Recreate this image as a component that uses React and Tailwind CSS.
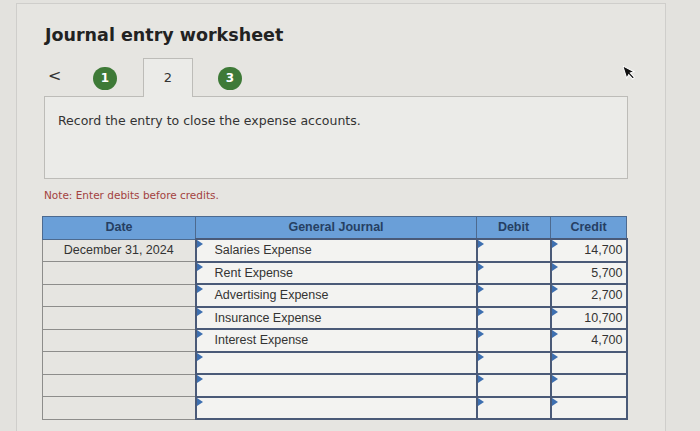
import React from "react";

const rows = [
  { date: "December 31, 2024", account: "Salaries Expense", credit: "14,700" },
  { date: "", account: "Rent Expense", credit: "5,700" },
  { date: "", account: "Advertising Expense", credit: "2,700" },
  { date: "", account: "Insurance Expense", credit: "10,700" },
  { date: "", account: "Interest Expense", credit: "4,700" },
  { date: "", account: "", credit: "" },
  { date: "", account: "", credit: "" },
  { date: "", account: "", credit: "" },
];

const Marker = () => (
  <span className="absolute left-0 top-0 w-0 h-0 border-t-[4px] border-b-[4px] border-l-[6px] border-t-transparent border-b-transparent border-l-[#3d6fb0]"></span>
);

const Step = ({ n }) => (
  <div className="w-[24px] h-[23px] rounded-full bg-[#3e7a37] text-white text-[12px] font-bold flex items-center justify-center font-['DejaVu_Sans',sans-serif]">
    {n}
  </div>
);

export default function App() {
  return (
    <div className="w-[700px] h-[431px] bg-[#e3e2de] overflow-hidden relative">
      <div className="ml-[16px] mt-[3px] w-[650px] h-[440px] border-l border-t border-r border-[#cfcecb] bg-[#e6e5e1] pl-[25px]">
        <h1 className="mt-[19px] ml-[3px] text-[17.5px] font-bold text-[#222] font-['DejaVu_Sans',sans-serif] leading-[24px]">
          Journal entry worksheet
        </h1>

        {/* tabs */}
        <div className="mt-[11px] ml-[1px] flex items-end h-[39px] relative z-10">
          <div className="w-[50px] h-[38px] flex items-center pl-[5px] pb-[4px] text-[16px] text-[#333] font-['DejaVu_Sans',sans-serif]">
            &lt;
          </div>
          <div className="w-[50px] h-[38px] flex items-center">
            <Step n="1" />
          </div>
          <div className="w-[50px] h-[39px] border border-b-0 border-[#bdbcb8] bg-[#ebebe8] flex items-center justify-center text-[13px] text-[#333] font-['DejaVu_Sans',sans-serif]">
            2
          </div>
          <div className="w-[62px] h-[38px] flex items-center pl-[25px]">
            <Step n="3" />
          </div>
        </div>

        <div className="-mt-[1px] ml-[2px] w-[584px] h-[83px] border border-[#bdbcb8] bg-[#ebebe8] pt-[15px] pl-[13px]">
          <p className="text-[12.5px] text-[#333] font-['DejaVu_Sans',sans-serif]">
            Record the entry to close the expense accounts.
          </p>
        </div>

        <p className="mt-[9px] ml-[2px] text-[10.5px] text-[#a3423f] font-['DejaVu_Sans',sans-serif]">
          Note: Enter debits before credits.
        </p>

        <table className="mt-[12px] border-collapse text-[12.5px] text-[#333] font-['Liberation_Sans',Arial,sans-serif]">
          <thead>
            <tr className="h-[23px] bg-[#6a9fd8] text-[#263f63] font-bold">
              <th className="w-[153px] border border-[#4d6a8f] font-bold">Date</th>
              <th className="w-[281px] border border-[#4d6a8f] font-bold">General Journal</th>
              <th className="w-[74px] border border-[#4d6a8f] font-bold">Debit</th>
              <th className="w-[76px] border border-[#4d6a8f] font-bold">Credit</th>
            </tr>
          </thead>
          <tbody>
            {rows.map((r, i) => (
              <tr key={i} className="h-[22.5px]">
                <td className="border border-[#8d8d8b] text-center p-0">{r.date}</td>
                <td className="relative border-2 border-[#4a5a78] bg-[#f3f3f1] pl-[18px] p-0">
                  <Marker />
                  {r.account}
                </td>
                <td className="relative border-2 border-[#4a5a78] bg-[#f3f3f1] p-0">
                  <Marker />
                </td>
                <td className="relative border-2 border-[#4a5a78] bg-[#f3f3f1] text-right pr-[3px] p-0">
                  <Marker />
                  {r.credit}
                </td>
              </tr>
            ))}
          </tbody>
        </table>
      </div>

      {/* mouse pointer */}
      <svg className="absolute left-[623px] top-[63px]" width="14" height="18" viewBox="0 0 14 18">
        <path d="M2 1 L2 14 L5 11 L7.5 16.5 L9.5 15.5 L7 10 L11 10 Z" fill="#111" stroke="#fff" strokeWidth="1" transform="rotate(-18 7 9)" />
      </svg>
    </div>
  );
}
